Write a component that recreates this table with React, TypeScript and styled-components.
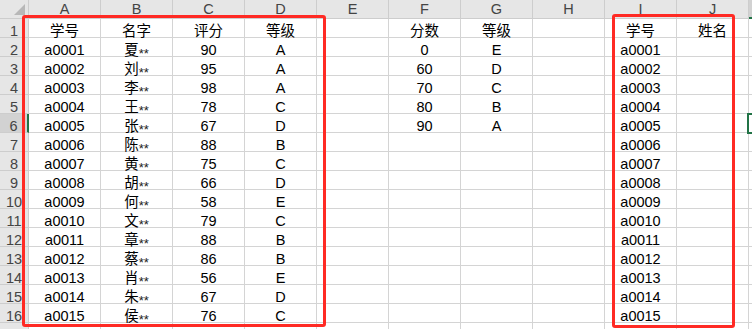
import React from "react";
import styled, { createGlobalStyle } from "styled-components";

const GlobalStyle = createGlobalStyle`
  html, body {
    margin: 0;
    padding: 0;
    background: #ffffff;
    overflow: hidden;
  }
  body {
    font-family: "Liberation Sans", "Noto Sans CJK SC", sans-serif;
  }
`;

const GRID = "#d4d4d4";
const HEAD_BG = "#e6e6e6";
const HEAD_LINE = "#cdcdcd";
const GREEN = "#217346";
const RED = "#ff2a24";

const Sheet = styled.div`
  position: relative;
  width: 752px;
  height: 329px;
  overflow: hidden;
`;

const Grid = styled.div`
  display: grid;
  grid-template-columns: 29px repeat(11, 72px);
  grid-auto-rows: 19px;
  width: max-content;
`;

const Corner = styled.div`
  box-sizing: border-box;
  background: ${HEAD_BG};
  border-right: 1px solid ${HEAD_LINE};
  border-bottom: 1px solid ${HEAD_LINE};
  display: flex;
  align-items: flex-end;
  justify-content: flex-end;
  padding: 0 3px 3px 0;
`;

const ColHead = styled.div<{ $active?: boolean }>`
  box-sizing: border-box;
  background: ${(p) => (p.$active ? "#d2d2d2" : HEAD_BG)};
  border-right: 1px solid ${HEAD_LINE};
  border-bottom: ${(p) => (p.$active ? `2px solid ${GREEN}` : `1px solid ${HEAD_LINE}`)};
  color: #444444;
  font-size: 14.5px;
  line-height: 18px;
  text-align: center;
`;

const RowHead = styled.div<{ $active?: boolean }>`
  box-sizing: border-box;
  background: ${(p) => (p.$active ? "#d2d2d2" : HEAD_BG)};
  border-right: ${(p) => (p.$active ? `2px solid ${GREEN}` : `1px solid ${HEAD_LINE}`)};
  border-bottom: 1px solid ${HEAD_LINE};
  color: #444444;
  font-size: 14.5px;
  line-height: 18px;
  padding-top: 3px;
  text-align: center;
  white-space: nowrap;
`;

const Cell = styled.div`
  box-sizing: border-box;
  border-right: 1px solid ${GRID};
  border-bottom: 1px solid ${GRID};
  color: #000000;
  font-size: 14.5px;
  line-height: 18px;
  padding-top: 3px;
  text-align: center;
  white-space: nowrap;
`;

const Stars = styled.span`
  font-size: 13px;
  vertical-align: -3px;
  color: #222222;
`;

const Mark = styled.div<{ $left: number; $top: number; $w: number; $h: number }>`
  position: absolute;
  box-sizing: border-box;
  left: ${(p) => p.$left}px;
  top: ${(p) => p.$top}px;
  width: ${(p) => p.$w}px;
  height: ${(p) => p.$h}px;
  border: 3px solid ${RED};
  border-radius: 3px;
  pointer-events: none;
`;

const Selection = styled.div`
  position: absolute;
  box-sizing: border-box;
  left: 747px;
  top: 113px;
  width: 74px;
  height: 21px;
  border: 2px solid ${GREEN};
`;

const cols = ["A", "B", "C", "D", "E", "F", "G", "H", "I", "J", "K"];

const names = ["夏", "刘", "李", "王", "张", "陈", "黄", "胡", "何", "文", "章", "蔡", "肖", "朱", "侯"];
const scores = ["90", "95", "98", "78", "67", "88", "75", "66", "58", "79", "88", "86", "56", "67", "76"];
const grades = ["A", "A", "A", "C", "D", "B", "C", "D", "E", "C", "B", "B", "E", "D", "C"];
const table2: [string, string][] = [
  ["0", "E"],
  ["60", "D"],
  ["70", "C"],
  ["80", "B"],
  ["90", "A"],
];

type CellValue = React.ReactNode;

function buildRows(): CellValue[][] {
  const rows: CellValue[][] = [];
  rows.push(["学号", "名字", "评分", "等级", "", "分数", "等级", "", "学号", "姓名", ""]);
  for (let i = 0; i < 16; i++) {
    if (i < 15) {
      const id = "a" + String(i + 1).padStart(4, "0");
      const t = table2[i];
      rows.push([
        id,
        <>
          {names[i]}
          <Stars>**</Stars>
        </>,
        scores[i],
        grades[i],
        "",
        t ? t[0] : "",
        t ? t[1] : "",
        "",
        id,
        "",
        "",
      ]);
    } else {
      rows.push(["", "", "", "", "", "", "", "", "", "", ""]);
    }
  }
  return rows;
}

const CornerTriangle = () => (
  <svg width="11" height="11" viewBox="0 0 11 11">
    <polygon points="11,0 11,11 0,11" fill="#b8b8b8" />
  </svg>
);

export default function App() {
  const rows = buildRows();
  return (
    <>
      <GlobalStyle />
      <Sheet>
        <Grid>
          <Corner>
            <CornerTriangle />
          </Corner>
          {cols.map((c) => (
            <ColHead key={c} $active={c === "K"}>
              {c === "K" ? "" : c}
            </ColHead>
          ))}
          {rows.map((r, ri) => (
            <React.Fragment key={ri}>
              <RowHead $active={ri + 1 === 6}>{ri + 1 <= 16 ? ri + 1 : ""}</RowHead>
              {r.map((v, ci) => (
                <Cell key={ci}>{v}</Cell>
              ))}
            </React.Fragment>
          ))}
        </Grid>
        <Selection />
        <Mark $left={22} $top={15} $w={304} $h={312} />
        <Mark $left={612} $top={14} $w={123} $h={314} />
      </Sheet>
    </>
  );
}
